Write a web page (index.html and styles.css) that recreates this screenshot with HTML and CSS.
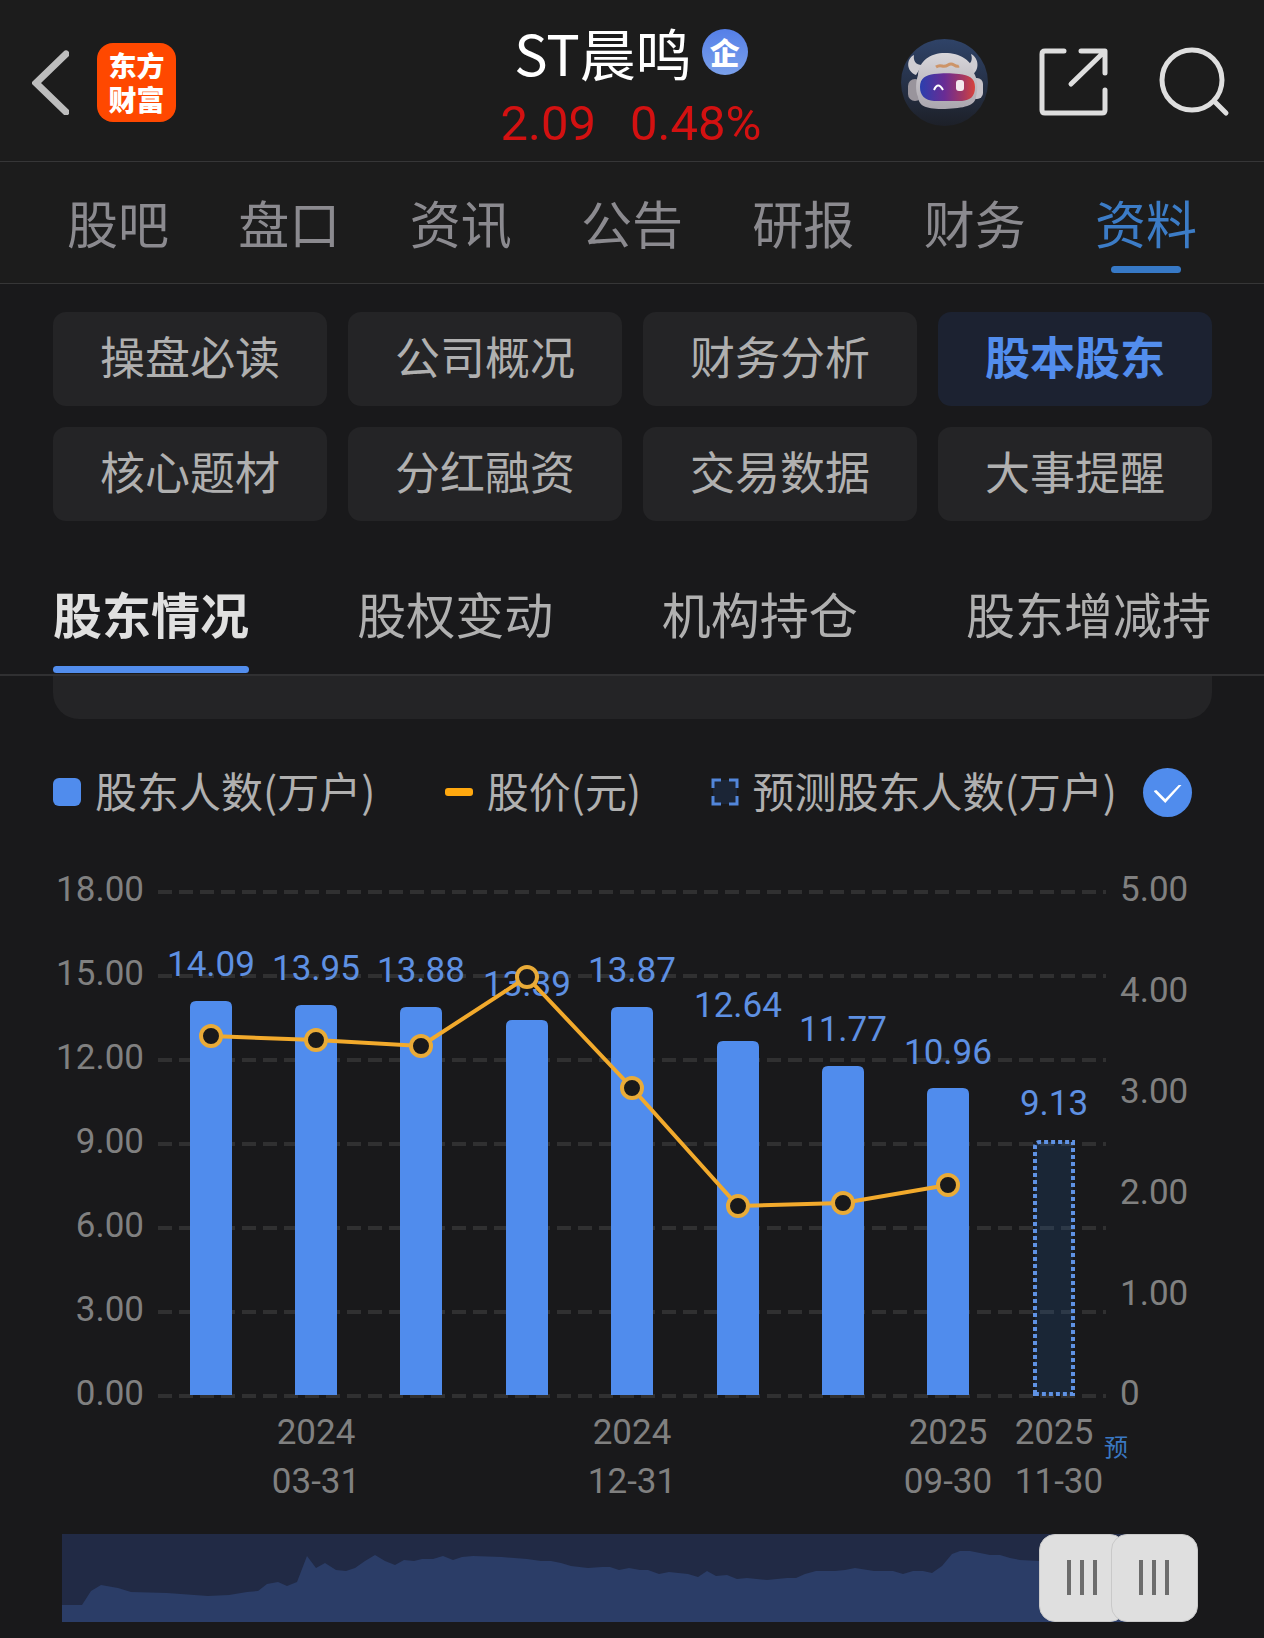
FILE: index.html
```html
<!DOCTYPE html>
<html lang="zh-CN">
<head>
<meta charset="utf-8">
<meta name="viewport" content="width=device-width, initial-scale=1">
<title>ST晨鸣 - 股本股东</title>
<link rel="stylesheet" href="styles.css">
</head>
<body>
<header class="header">
  <div class="header-left">
    <button class="icon-button" type="button" aria-label="返回">
      <svg width="37" height="66" viewBox="0 0 37 66"><path d="M34 5 4 34l30 29" fill="none" stroke="#bdbdbd" stroke-width="7" stroke-linecap="round"/></svg>
    </button>
    <a class="logo" href="#"><span>东方</span><span>财富</span></a>
  </div>
  <div class="stock">
    <h1 class="stock-name">ST晨鸣<span class="badge">企</span></h1>
    <p class="quote"><span>2.09</span><span>0.48%</span></p>
  </div>
  <div class="header-right">
    <button class="icon-button" type="button" aria-label="智能助手">
      <svg width="87" height="87" viewBox="0 0 87 87">
        <defs>
          <linearGradient id="sky" x1="0" y1="0" x2="0" y2="1"><stop offset="0" stop-color="#2f4368"/><stop offset="1" stop-color="#1d2028"/></linearGradient>
          <linearGradient id="visor"><stop offset="0" stop-color="#2a3fae"/><stop offset=".45" stop-color="#6a2c94"/><stop offset=".8" stop-color="#a8385f"/><stop offset="1" stop-color="#d8443c"/></linearGradient>
          <linearGradient id="fur" x1="0" y1="0" x2="0" y2="1"><stop offset="0" stop-color="#d8d6da"/><stop offset="1" stop-color="#aaa6ae"/></linearGradient>
        </defs>
        <circle cx="43.500" cy="43.500" r="43.500" fill="url(#sky)"/>
        <path d="M13 16C5 20 5 32 15 36l6-10c-6 0-9-4-8-10zM70 15c8 4 9 16 1 21l-6-10c5-1 7-5 5-11z" fill="#cfcdd2"/>
        <rect x="7" y="40" width="14" height="22" rx="7" fill="#99949c"/>
        <rect x="69" y="39" width="13" height="21" rx="6" fill="#c7c3c9"/>
        <path d="M17 36C18 22 29 14 44 14s27 7 29 20c4 7 4 16 2 24-1 9-12 11-31 12-18 0-26-2-27-12-3-7-2-16 0-22z" fill="url(#fur)"/>
        <path d="M19 48c0-9 6-12 14-13 9-1 16-1 25 0 10 1 16 4 16 13 0 10-5 13-13 14H33c-9-1-14-5-14-14z" fill="url(#visor)"/>
        <path d="M35 28q3-2 6-1t6-1 6 0 5 1" fill="none" stroke="#cd9468" stroke-width="3"/>
        <path d="M33 51q4-9 9 0" fill="none" stroke="#fff" stroke-width="2"/>
        <rect x="55" y="41" width="8" height="11" rx="3" fill="#f3e9ee"/>
      </svg>
    </button>
    <button class="icon-button" type="button" aria-label="分享">
      <svg width="70" height="70" viewBox="0 0 70 70"><g fill="none" stroke="#dedede" stroke-width="5" stroke-linecap="round" stroke-linejoin="round"><path d="M26 4H7q-3 0-3 3v56q0 3 3 3h57q3 0 3-3V43M43 4h24v22M66 5 33 37"/></g></svg>
    </button>
    <button class="icon-button" type="button" aria-label="搜索">
      <svg width="72" height="72" viewBox="-2 0 72 72"><g fill="none" stroke="#dedede" stroke-width="5" stroke-linecap="round"><circle cx="32" cy="34" r="30"/><path d="m54 55 12 12"/></g></svg>
    </button>
  </div>
</header>

<nav class="main-tabs" aria-label="个股栏目">
  <a href="#">股吧</a><a href="#">盘口</a><a href="#">资讯</a><a href="#">公告</a><a href="#">研报</a><a href="#">财务</a><a class="current" href="#" aria-current="page">资料</a>
</nav>

<main>
  <div class="topics">
    <button type="button">操盘必读</button>
    <button type="button">公司概况</button>
    <button type="button">财务分析</button>
    <button class="active" type="button">股本股东</button>
    <button type="button">核心题材</button>
    <button type="button">分红融资</button>
    <button type="button">交易数据</button>
    <button type="button">大事提醒</button>
  </div>

  <nav class="sub-tabs" aria-label="股本股东">
    <a class="current" href="#" aria-current="page">股东情况</a>
    <a href="#">股权变动</a>
    <a href="#">机构持仓</a>
    <a href="#">股东增减持</a>
  </nav>

  <div class="card-end"></div>

  <div class="legend">
    <span class="legend-item"><i class="swatch bar"></i>股东人数(万户)</span>
    <span class="legend-item"><i class="swatch line"></i>股价(元)</span>
    <span class="legend-item">
      <svg class="swatch" viewBox="0 0 28 28"><rect x="2" y="2" width="24" height="24" fill="#1b2536"/><path d="M2 10V2h8M18 2h8v8M26 18v8h-8M10 26H2v-8" fill="none" stroke="#5286da" stroke-width="3"/></svg>
      <label for="forecast">预测股东人数(万户)</label>
      <input id="forecast" class="check" type="checkbox" checked>
    </span>
  </div>

  <svg class="chart" viewBox="0 0 1264 660" role="img" aria-label="股东人数与股价">
    <g class="grid">
      <path d="M158 42h948M158 126h948M158 210h948M158 294h948M158 378h948M158 462h948M158 546h948"/>
    </g>
    <g class="axis end">
      <text x="144" y="51">18.00</text><text x="144" y="135">15.00</text><text x="144" y="219">12.00</text><text x="144" y="303">9.00</text><text x="144" y="387">6.00</text><text x="144" y="471">3.00</text><text x="144" y="555">0.00</text>
    </g>
    <g class="axis">
      <text x="1120" y="51">5.00</text><text x="1120" y="152">4.00</text><text x="1120" y="253">3.00</text><text x="1120" y="354">2.00</text><text x="1120" y="455">1.00</text><text x="1120" y="555">0</text>
    </g>
    <g class="bars">
      <path d="M190 545V157q0-6 6-6h30q6 0 6 6v388z"/>
      <path d="M295 545V161q0-6 6-6h30q6 0 6 6v384z"/>
      <path d="M400 545V163q0-6 6-6h30q6 0 6 6v382z"/>
      <path d="M506 545V176q0-6 6-6h30q6 0 6 6v369z"/>
      <path d="M611 545V163q0-6 6-6h30q6 0 6 6v382z"/>
      <path d="M717 545V197q0-6 6-6h30q6 0 6 6v348z"/>
      <path d="M822 545V222q0-6 6-6h30q6 0 6 6v323z"/>
      <path d="M927 545V244q0-6 6-6h30q6 0 6 6v301z"/>
    </g>
    <path class="forecast-bar" d="M1035 544V297q0-5 5-5h33v252z"/>
    <g class="values">
      <text x="211" y="126">14.09</text><text x="316" y="130">13.95</text><text x="421" y="132">13.88</text><text x="527" y="146">13.39</text><text x="632" y="132">13.87</text><text x="738" y="167">12.64</text><text x="843" y="191">11.77</text><text x="948" y="214">10.96</text><text x="1054" y="265">9.13</text>
    </g>
    <g class="price">
      <path d="M211 186 316 190 421 196 527 127 632 238 738 356 843 353 948 335"/>
      <circle cx="211" cy="186" r="10"/><circle cx="316" cy="190" r="10"/><circle cx="421" cy="196" r="10"/><circle cx="527" cy="127" r="10"/><circle cx="632" cy="238" r="10"/><circle cx="738" cy="356" r="10"/><circle cx="843" cy="353" r="10"/><circle cx="948" cy="335" r="10"/>
    </g>
    <g class="axis middle">
      <text x="316" y="594">2024</text><text x="316" y="643">03-31</text>
      <text x="632" y="594">2024</text><text x="632" y="643">12-31</text>
      <text x="948" y="594">2025</text><text x="948" y="643">09-30</text>
      <text x="1054" y="594">2025</text><text x="1059" y="643">11-30</text>
    </g>
    <text class="tag" x="1104" y="606">预</text>
  </svg>

  <div class="range">
    <svg class="range-area" viewBox="0 0 1093 88" preserveAspectRatio="none" aria-hidden="true">
      <rect width="1093" height="88" fill="#212a45"/>
      <path d="M0 71 20 71 29 57 39 51 56 54 69 58 105 59 146 62 167 61 185 58 196 57 205 50 216 48 225 52 235 48 245 22 254 34 263 29 274 36 284 37 293 34 303 27 313 21 323 27 333 31 342 26 352 27 360 25 371 25 381 22 391 26 400 23 411 22 440 23 465 25 479 27 489 27 499 29 509 32 526 34 540 33 548 33 557 36 567 34 578 36 586 36 597 40 607 38 626 40 636 43 645 37 654 42 665 41 675 45 685 44 705 46 725 44 734 44 743 40 754 37 773 37 783 36 793 34 812 37 831 37 841 40 851 37 861 37 870 39 880 32 890 20 898 17 908 17 928 21 938 21 948 24 958 26 977 27 1093 29V88H0z" fill="#2b3d67"/>
    </svg>
    <input class="handle" type="range" min="0" max="1000" value="931" aria-label="起始日期">
    <input class="handle" type="range" min="0" max="1000" value="1000" aria-label="结束日期">
  </div>
</main>
</body>
</html>
```
FILE: styles.css
```css
* { box-sizing: border-box; }

body {
  margin: 0;
  background: #19191b;
  color: #b0b0b0;
  font-family: "Noto Sans CJK SC", sans-serif;
}

a { color: inherit; text-decoration: none; }

button {
  margin: 0;
  padding: 0;
  border: 0;
  background: none;
  color: inherit;
  font: inherit;
}

svg { display: block; }

.header {
  display: grid;
  grid-template-columns: 1fr auto 1fr;
  align-items: center;
  padding: 22px 34px 9px 32px;
  background: #1c1c1c;
  border-bottom: 1px solid #363637;
}

.header-left, .header-right {
  display: flex;
  align-items: center;
  margin-top: -10px;
}

.header-left { gap: 28px; }
.header-right { justify-content: flex-end; gap: 50px; }

.logo {
  display: flex;
  flex-direction: column;
  align-items: center;
  justify-content: center;
  width: 79px;
  height: 79px;
  border-radius: 16px;
  background: #ff4800;
  color: #fff;
  font-size: 28px;
  font-weight: 900;
  line-height: 34px;
}

.stock-name {
  display: flex;
  align-items: center;
  justify-content: center;
  gap: 10px;
  margin: 0 0 14px;
  color: #fff;
  font-size: 56px;
  font-weight: 400;
  line-height: 60px;
}

.badge {
  width: 46px;
  height: 46px;
  border-radius: 50%;
  background: linear-gradient(#557fe8, #7aa0ea);
  font-size: 30px;
  font-weight: 900;
  line-height: 44px;
  text-align: center;
}

.quote {
  display: flex;
  justify-content: center;
  gap: 34px;
  margin: 0;
  color: #d31111;
  font-family: Roboto, sans-serif;
  font-size: 49px;
  font-weight: 400;
  line-height: 56px;
}

.main-tabs {
  display: flex;
  justify-content: space-between;
  padding: 0 67px;
  background: #1c1c1c;
  border-bottom: 1px solid #363637;
  color: #8b8a8f;
  font-size: 51px;
  line-height: 121px;
}

.main-tabs .current { position: relative; color: #3c7cc6; }

.main-tabs .current::after {
  content: "";
  position: absolute;
  left: 16px;
  right: 16px;
  bottom: 10px;
  height: 7px;
  border-radius: 4px;
  background: #3779c6;
}

.topics {
  display: grid;
  grid-template-columns: repeat(4, 1fr);
  gap: 21px;
  padding: 28px 52px 0 53px;
}

.topics button {
  height: 94px;
  padding-bottom: 7px;
  border-radius: 13px;
  background: #242426;
  font-size: 45px;
}

.topics .active {
  background: #1c2231;
  color: #528ded;
  font-weight: 700;
}

.sub-tabs {
  display: flex;
  justify-content: space-between;
  margin-top: 56px;
  padding: 0 53px;
  border-bottom: 2px solid #303032;
  font-size: 49px;
  line-height: 72px;
}

.sub-tabs a { padding-bottom: 25px; }

.sub-tabs .current {
  position: relative;
  color: #e0e0e0;
  font-weight: 700;
}

.sub-tabs .current::after {
  content: "";
  position: absolute;
  left: 0;
  right: 0;
  bottom: 1px;
  height: 7px;
  border-radius: 4px;
  background: #528ded;
}

.card-end {
  height: 43px;
  margin: 0 52px 0 53px;
  border-radius: 0 0 26px 26px;
  background: #242426;
}

.legend {
  display: flex;
  justify-content: space-between;
  margin-top: 41px;
  padding: 0 72px 0 53px;
  font-size: 42px;
  line-height: 60px;
}

.legend-item { display: flex; align-items: center; }

.swatch {
  width: 28px;
  height: 28px;
  margin: 4px 14px 0 0;
}

.swatch.bar { border-radius: 6px; background: #508ced; }
.swatch.line { height: 8px; border-radius: 3px; background: #ffa80f; }

.check {
  appearance: none;
  display: grid;
  place-items: center;
  width: 49px;
  height: 49px;
  margin: 4px 0 0 26px;
  padding-top: 4px;
  border-radius: 50%;
  background: #508ced;
}

.check:not(:checked) { background: #3a3a3c; }

.check::before {
  content: "";
  width: 28px;
  height: 18px;
  background: #fff;
  clip-path: polygon(0 34%, 10% 28%, 42% 78%, 90% 0, 100% 0, 42% 100%);
}

.chart {
  width: 100%;
  height: auto;
  margin-top: 30px;
  font-family: Roboto, "Noto Sans CJK SC", sans-serif;
  font-size: 35px;
}

.grid { fill: none; stroke: #303031; stroke-width: 4; stroke-dasharray: 14 7; }
.axis { fill: #808080; }
.end { text-anchor: end; }
.middle { text-anchor: middle; }
.values { fill: #5e90e2; text-anchor: middle; }
.bars { fill: #508ced; }

.forecast-bar {
  fill: rgba(36, 98, 180, 0.18);
  stroke: #5f92e4;
  stroke-width: 4;
  stroke-dasharray: 4 3;
}

.price { fill: none; stroke: #f2aa2c; stroke-width: 4; }
.price circle { fill: #19191b; stroke: #e9ab38; }
.tag { fill: #3a78c2; font-size: 24px; }

.range {
  position: relative;
  height: 88px;
  margin: 24px 66px 16px 62px;
}

.range-area { width: calc(100% - 43px); height: 100%; }

/* Two sliders share one track; only their thumbs take the pointer. */
.handle {
  appearance: none;
  position: absolute;
  inset: 0;
  width: 100%;
  height: 100%;
  margin: 0;
  background: none;
  pointer-events: none;
}

.handle::-webkit-slider-thumb {
  appearance: none;
  width: 87px;
  height: 88px;
  border: 1px solid #c9c9c9;
  border-radius: 16px;
  background:
    linear-gradient(#6c6c6c, #6c6c6c) 27px 25px / 4px 35px no-repeat,
    linear-gradient(#6c6c6c, #6c6c6c) 40px 25px / 4px 35px no-repeat,
    linear-gradient(#6c6c6c, #6c6c6c) 53px 25px / 4px 35px no-repeat,
    #dfdfdf;
  pointer-events: auto;
}
```
